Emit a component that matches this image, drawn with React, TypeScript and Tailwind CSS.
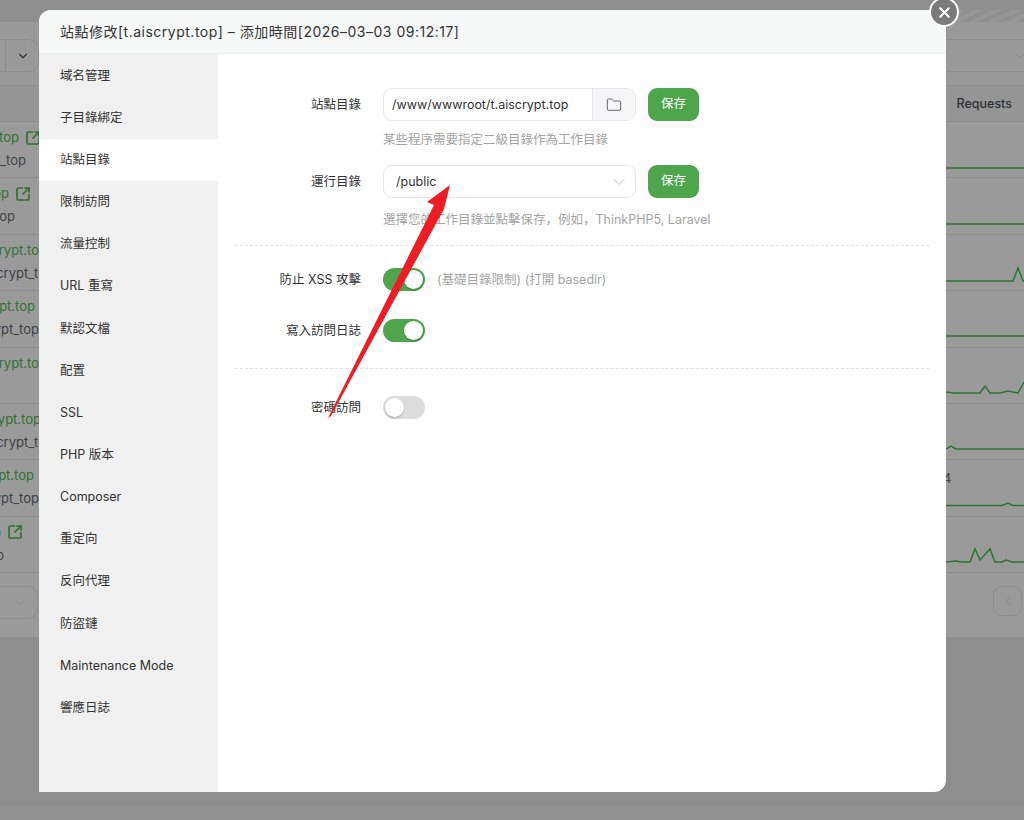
import { ChevronDown, ChevronLeft, Folder, SquareArrowOutUpRight, X } from 'lucide-react';

const menuItems = [
  '域名管理', '子目錄綁定', '站點目錄', '限制訪問', '流量控制', 'URL 重寫', '默認文檔', '配置',
  'SSL', 'PHP 版本', 'Composer', '重定向', '反向代理', '防盜鏈', 'Maintenance Mode', '響應日誌',
];

const siteRows = [
  { nameBox: 'w-[41px]', subBox: 'w-[26px]', link: true, sub: 't_aiscrypt_top', spark: '0,46 78,46' },
  { nameBox: 'w-[31px]', subBox: 'w-[15px]', link: true, sub: 't_aiscrypt_top', spark: '0,46 78,46' },
  { nameBox: 'w-[47px]', subBox: 'w-[54px]', link: false, sub: 't_aiscrypt_top', spark: '0,46 67,46 72,33 77,46 78,46' },
  { nameBox: 'w-[35px]', subBox: 'w-[39px]', link: false, sub: 't_aiscrypt_top', spark: '0,45 78,45' },
  { nameBox: 'w-[47px]', subBox: '', link: false, sub: '', spark: '0,44 8,45 34,45 39,38 44,45 54,45 62,43 72,45 78,34' },
  { nameBox: 'w-[41px]', subBox: 'w-[54px]', link: false, sub: 't_aiscrypt_top', spark: '0,45 5,42 10,45 78,45' },
  { nameBox: 'w-[34px]', subBox: 'w-[39px]', link: false, sub: 't_aiscrypt_top', spark: '0,45.5 56,45.5 62,43 67,45.5 78,45.5', count: true },
  { nameBox: 'w-[23px]', subBox: 'w-[4px]', link: true, sub: 't_aiscrypt_to', spark: '0,45 10,44 16,45 24,45 29,32 34,43 44,32 49,45 56,45 60,43 66,45 78,45' },
];

function Toggle({ on }: { on: boolean }) {
  return (
    <div className={`flex h-[23px] w-[42px] items-center rounded-full p-[2px] ${on ? 'justify-end bg-[#4fa54c]' : 'justify-start bg-[#dcdcdc]'}`}>
      <div className="h-[19px] w-[19px] rounded-full bg-white shadow-[0_1px_2px_rgba(0,0,0,0.25)]" />
    </div>
  );
}

function Label({ children }: { children: React.ReactNode }) {
  return <div className="w-[126px] pt-px text-right text-[#333]">{children}</div>;
}

function SaveButton() {
  return (
    <button className="ml-3 flex h-[33px] w-[51px] items-center justify-center rounded-[9px] bg-[#4fa54c] text-white">
      保存
    </button>
  );
}

function Backdrop() {
  return (
    <div className="flex h-[820px] flex-col bg-[#8f8f8f] text-[13px] text-[#3f4144]">
      <div className="flex h-[22px] flex-col">
        <div className="h-[10px]" />
        <div className="flex h-[12px] justify-end">
          <div className="w-[78px] bg-[repeating-linear-gradient(155deg,#8f8f8f_0px,#8f8f8f_4px,#979797_4px,#979797_8px)]" />
        </div>
      </div>
      <div className="flex h-[63px] items-start justify-between bg-[#999] pt-[17px]">
        <div className="flex h-[33px] w-[39px] items-center rounded-r-[10px] border border-l-0 border-[#8c8c8c]">
          <div className="h-full w-[6px] border-r border-[#8c8c8c]" />
          <ChevronDown className="ml-[10px] h-[14px] w-[14px] text-[#2f3033]" strokeWidth={2} />
        </div>
        <div className="flex h-[33px] w-[78px] items-center justify-end border-y border-[#8c8c8c]">
          <ChevronDown className="-mr-[4px] h-[16px] w-[16px] text-[#7c7c7c]" strokeWidth={1} />
        </div>
      </div>
      <div className="flex h-[37px] items-center justify-end border-y border-[#8b8b8b] bg-[#959595] pt-[2px] pr-[12px] text-[12.5px] font-medium text-[#303236]">
        Requests
      </div>
      {siteRows.map((row, i) => (
        <div key={i} className="flex h-[56.4px] justify-between border-b border-[#8b8b8b] bg-[#9a9a9a]">
          <div className="flex flex-col gap-[4px] pt-[6px] leading-[19px] whitespace-nowrap">
            <div className={`flex items-center justify-end gap-[6px] text-[#356f33] ${row.nameBox}`}>
              <span>t.aiscrypt.top</span>
              {row.link && <SquareArrowOutUpRight className="h-4 w-4 shrink-0" strokeWidth={2.6} />}
            </div>
            {row.sub && (
              <div className={`flex justify-end ${row.subBox}`}>
                <span>{row.sub}</span>
              </div>
            )}
          </div>
          <div className="relative w-[78px]">
            <svg width="78" height="56" viewBox="0 0 78 56" fill="none">
              <polyline points={row.spark} stroke="#2f7434" strokeWidth="1.5" />
            </svg>
            {row.count && <span className="absolute top-[9px] -left-[3px]">4</span>}
          </div>
        </div>
      ))}
      <div className="flex h-[64px] items-start justify-between bg-[#9a9a9a] pt-[13px] pr-[2px]">
        <div className="flex h-[33px] w-[38px] items-center justify-end rounded-r-[10px] border border-l-0 border-[#8c8c8c] pr-[10px]">
          <ChevronDown className="h-[14px] w-[14px] text-[#7c7c7c]" strokeWidth={1} />
        </div>
        <div className="flex h-[30px] w-[29px] items-center justify-center rounded-[9px] border border-[#8c8c8c]">
          <ChevronLeft className="h-4 w-4 text-[#7c7c7c]" strokeWidth={1} />
        </div>
      </div>
      <div className="flex-1 bg-[#8e8e8e]" />
      <div className="h-[14px] bg-[#919191]" />
    </div>
  );
}

function Modal() {
  return (
    <div className="absolute top-[10px] left-[39px] h-[782px] w-[907px] rounded-[12px] rounded-bl-none bg-white">
      <div className="flex h-[44px] items-center rounded-t-[12px] border-b border-[#eceeee] bg-[#f6f8f8] pl-[21px] text-[14px] tracking-[0.5px] text-[#333]">
        站點修改[t.aiscrypt.top] – 添加時間[2026–03–03 09:12:17]
      </div>
      <div className="flex h-[738px] text-[12.5px]">
        <div className="w-[179px] bg-[#f0f0f0] pt-px">
          {menuItems.map(item => (
            <div
              key={item}
              className={`flex h-[42.15px] items-center pl-[21px] text-[#333] ${item === '站點目錄' ? 'bg-white' : ''}`}
            >
              {item}
            </div>
          ))}
        </div>
        <div className="flex-1 px-[17px] pt-[34px]">
          <div className="flex items-center gap-[22px]">
            <Label>站點目錄</Label>
            <div className="flex items-center">
              <div className="flex h-[33px] w-[253px] overflow-hidden rounded-[9px] border border-[#e5e5ec]">
                <div className="flex flex-1 items-center pt-px pl-[8px] text-[#333]">/www/wwwroot/t.aiscrypt.top</div>
                <div className="flex w-[43px] items-center justify-center border-l border-[#e5e5ec] bg-[#f5f5f7]">
                  <Folder className="h-4 w-4 text-[#444]" strokeWidth={1.2} />
                </div>
              </div>
              <SaveButton />
            </div>
          </div>
          <div className="mt-[10px] pl-[148px] leading-[17px] text-[#a3a3a3]">某些程序需要指定二級目錄作為工作目錄</div>
          <div className="mt-[17px] flex items-center gap-[22px]">
            <Label>運行目錄</Label>
            <div className="flex items-center">
              <div className="flex h-[33px] w-[253px] items-center justify-between rounded-[9px] border border-[#e5e5ec] pt-px pr-[6px] pl-[12px] text-[#333]">
                /public
                <ChevronDown className="h-5 w-5 text-[#b5b5b5]" strokeWidth={1} />
              </div>
              <SaveButton />
            </div>
          </div>
          <div className="mt-[13px] pl-[148px] leading-[17px] text-[#a3a3a3]">選擇您的工作目錄並點擊保存，例如，ThinkPHP5, Laravel</div>
          <div className="mt-[17px] border-t border-dashed border-[#e2e2e2]" />
          <div className="mt-[22px] flex items-center gap-[22px]">
            <Label>防止 XSS 攻擊</Label>
            <Toggle on />
            <div className="-ml-[10px] pt-px text-[#a3a3a3]">(基礎目錄限制) (打開 basedir)</div>
          </div>
          <div className="mt-[28px] flex items-center gap-[22px]">
            <Label>寫入訪問日誌</Label>
            <Toggle on />
          </div>
          <div className="mt-[26px] border-t border-dashed border-[#e2e2e2]" />
          <div className="mt-[27px] flex items-center gap-[22px]">
            <Label>密碼訪問</Label>
            <Toggle on={false} />
          </div>
        </div>
      </div>
    </div>
  );
}

export default function App() {
  return (
    <div className="relative h-[820px] w-[1024px] overflow-hidden font-['Inter','Noto_Sans_CJK_SC',sans-serif]">
      <Backdrop />
      <Modal />
      <button className="absolute top-[-3px] left-[929px] flex h-[30px] w-[30px] items-center justify-center rounded-full border-2 border-white bg-[#7a7a7a] text-white">
        <X className="h-[17px] w-[17px]" strokeWidth={3} />
      </button>
      <svg className="pointer-events-none absolute inset-0" width="1024" height="820" viewBox="0 0 1024 820">
        <polygon points="450,185 427,202 434,205 328,418 331,416 444,209" fill="#ee1c25" />
      </svg>
    </div>
  );
}
